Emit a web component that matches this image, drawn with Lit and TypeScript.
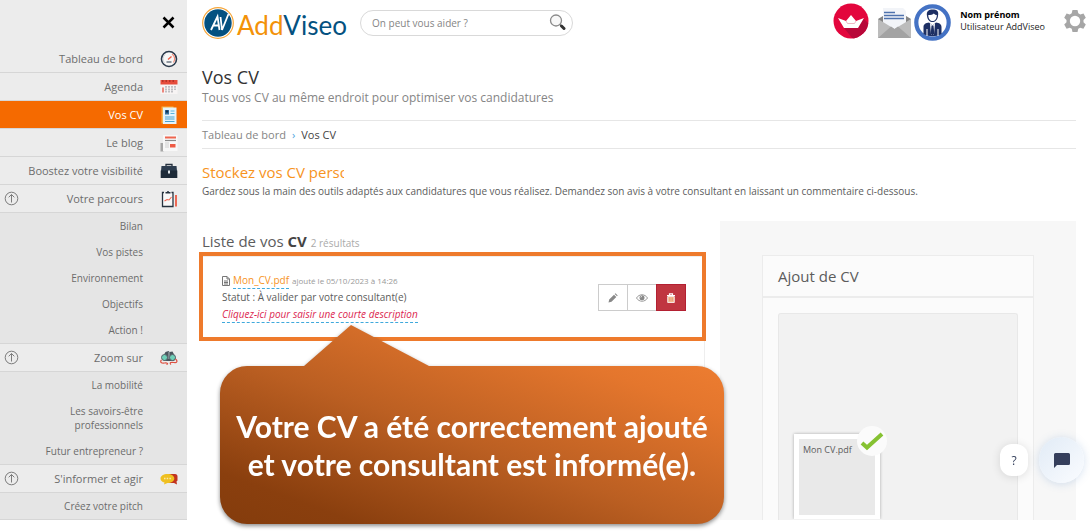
import { LitElement, html, css, svg, nothing, TemplateResult } from "lit";
import { customElement } from "lit/decorators.js";
import { classMap } from "lit/directives/class-map.js";

interface MenuEntry {
  label: string;
  icon: TemplateResult;
  active?: boolean;
  children?: string[];
}

const gauge = svg`
  <circle cx="9" cy="9" r="7.5" fill="#f7f7f7" stroke="#2b3a4c" stroke-width="1.6"/>
  <path d="M4.5 13A6 6 0 0 1 5 4.600" fill="none" stroke="#cfd3d8"/>
  <path d="M12 4a6 6 0 0 1 1.500 8.500" fill="none" stroke="#f28b78" stroke-width="1.200"/>
  <path d="M8 9.500L11.500 6.500" stroke="#ee5b45" stroke-width="1.400"/>
  <path d="M6.500 12h5" stroke="#2b3a4c"/>`;

const agenda = svg`
  <rect x=".5" y="2" width="17" height="14" fill="#f7f4f4"/>
  <rect x=".5" y="2" width="17" height="4.500" fill="#e64c3c"/>
  <path d="M2 3h14" stroke="#a52b20" stroke-width="1.500" stroke-dasharray="1.500 2"/>
  <path d="M3 9.500v5" stroke="#e64c3c" stroke-width="1.300"/>
  <path d="M6 8v6.500M9 8v6.500M12 8v6.500M15 8v4" stroke="#a9a9ae" stroke-width="1.400" stroke-dasharray="1.800 .6"/>`;

const resume = svg`
  <path d="M1.500 .5h12v17h-12z" fill="#f6b44c"/>
  <path d="M3 1.500H16.500v16.500H3z" fill="#e3f3fb"/>
  <rect x="5" y="4" width="4" height="4.500" fill="#2f6f9d"/>
  <circle cx="7" cy="5.500" r="1.200" fill="#15324e"/>
  <path d="M10.500 5h4M10.500 7.500h4" stroke="#5ab4dc"/>
  <path d="M5 11h9.500M5 13h9.500M5 15.500h9.500" stroke="#4ba3cd" stroke-width="1.200"/>`;

const news = svg`
  <path d="M.5 9h3v8.500h-3z" fill="#a7a7a7"/>
  <rect x="3" y="1" width="14.500" height="16" fill="#f8f8f8"/>
  <path d="M5 3.500h11" stroke="#ee6650" stroke-width="2"/>
  <path d="M5 6.500h11" stroke="#8b8b8b" stroke-width="1.200"/>
  <path d="M5 9h4M5 11h4M5 13h4" stroke="#d0d0d0"/>
  <rect x="10" y="10" width="5.500" height="3.500" fill="#ee5b45"/>`;

const briefcase = svg`
  <path d="M6 4V2.500h6V4" fill="none" stroke="#26323f" stroke-width="1.300"/>
  <path d="M1.500 4h15l.5 5H1z" fill="#2d3d4f"/>
  <path d="M.7 8.500h16.600V16H.7z" fill="#1d2a38"/>
  <rect x="8" y="8.500" width="2" height="3" fill="#dfe5ea"/>`;

const clipboard = svg`
  <rect x="2" y="2.500" width="12" height="14.500" fill="#f8f8f8"/>
  <path d="M4 2.500H2.500V16.500H13V2.500h-1.500" fill="none" stroke="#26323f" stroke-width="1.300"/>
  <path d="M5.500 3.500V2h1.500a1 1 0 0 1 2 0h1.500v1.500z" fill="#26323f"/>
  <path d="M4.500 11l2.500-1.500 2 .5 2.500-3" fill="none" stroke="#ee6650" stroke-width="1.100"/>
  <path d="M16 5v11.500" stroke="#ee5b45" stroke-width="1.800"/>`;

const binoculars = svg`
  <path d="M2 9L5.500 3l3-1 1 1 3-.5 3.500 6.500-2 3H4z" fill="#4b555d"/>
  <path d="M8 3h2v7H8z" fill="#7b868d"/>
  <circle cx="4.500" cy="8.500" r="3" fill="#6fd0b8" stroke="#59646c"/>
  <circle cx="12.500" cy="8.500" r="3" fill="#6fd0b8" stroke="#59646c"/>
  <path d="M1.500 11c-2 2 0 3.500 3 3s4 1 2 1.500M15.500 10c2.500 2 1.500 4-1.500 3.500s-5 0-3 2" fill="none" stroke="#de5142" stroke-width="1.200"/>`;

const chats = svg`
  <path d="M9 4h6a2.500 2.500 0 0 1 2.500 2.500v4l-1 1 .5 3-3-1.500H9z" fill="#c23420"/>
  <path d="M7.500 4c4 0 6.800 2 6.800 4.500s-2.800 4.500-6.800 4.500l-3.500 1.500.5-2C2 12 .5 10.500.5 8.500.5 6 3.500 4 7.500 4z" fill="#efc021"/>
  <path d="M4 8.500h1.500M6.700 8.500h1.500M9.400 8.500h1.500" stroke="#fbe9ac" stroke-width="1.300"/>`;

const MENU: MenuEntry[] = [
  { label: "Tableau de bord", icon: gauge },
  { label: "Agenda", icon: agenda },
  { label: "Vos CV", icon: resume, active: true },
  { label: "Le blog", icon: news },
  { label: "Boostez votre visibilité", icon: briefcase },
  {
    label: "Votre parcours",
    icon: clipboard,
    children: ["Bilan", "Vos pistes", "Environnement", "Objectifs", "Action !"],
  },
  {
    label: "Zoom sur",
    icon: binoculars,
    children: ["La mobilité", "Les savoirs-être professionnels", "Futur entrepreneur ?"],
  },
  { label: "S'informer et agir", icon: chats, children: ["Créez votre pitch"] },
];

@customElement("side-menu")
class SideMenu extends LitElement {
  static styles = css`
    :host {
      display: block;
      background: #ececec;
      color: #6c6c6c;
    }
    ul {
      list-style: none;
      margin: 0;
      padding: 0;
    }
    a {
      color: inherit;
      text-decoration: none;
    }
    button {
      padding: 0;
      border: 0;
      background: none;
      cursor: pointer;
    }
    svg {
      display: block;
    }
    .top {
      display: flex;
      justify-content: flex-end;
      align-items: center;
      height: 45px;
      padding-right: 12px;
    }
    .row {
      display: flex;
      align-items: center;
      height: 27px;
      padding: 0 9px 0 4px;
      border-bottom: 1px solid #d6d6d6;
    }
    .link {
      flex: 1;
      display: flex;
      align-items: center;
      justify-content: flex-end;
      gap: 17px;
      font-size: 11px;
      line-height: 27px;
    }
    .active {
      background: #f56a00;
      color: #fff;
      font-weight: 500;
    }
    .sub {
      background: #e5e5e5;
      border-bottom: 1px solid #d6d6d6;
    }
    .sub a {
      display: block;
      padding: 6px 44px 6px 56px;
      text-align: right;
      font-size: 10px;
      line-height: 14px;
    }
    .sub .wide {
      padding-left: 20px;
    }
  `;

  render() {
    return html`
      <div class="top">
        <button aria-label="Fermer le menu">
          <svg width="13" height="13" viewBox="0 0 13 13">
            <path d="M1.500 1.500l10 10M11.500 1.500l-10 10" stroke="#000" stroke-width="2.500" />
          </svg>
        </button>
      </div>
      <nav>
        <ul>
          ${MENU.map(
            (m) => html`<li>
              <div class=${classMap({ row: true, active: !!m.active })}>
                ${m.children
                  ? html`<button aria-label="Replier ${m.label}">
                      <svg width="15" height="15" viewBox="0 0 15 15" fill="none" stroke="#7c7c7c">
                        <circle cx="7.500" cy="7.500" r="6.300" />
                        <path d="M7.500 11.500v-8M4.700 6.300l2.800-2.800 2.800 2.800" />
                      </svg>
                    </button>`
                  : nothing}
                <a class="link" href="#">
                  ${m.label}<svg width="18" height="18" viewBox="0 0 18 18" aria-hidden="true">${m.icon}</svg>
                </a>
              </div>
              ${m.children
                ? html`<ul class="sub">
                    ${m.children.map(
                      (c) => html`<li><a href="#" class=${classMap({ wide: c.length < 25 })}>${c}</a></li>`
                    )}
                  </ul>`
                : nothing}
            </li>`
          )}
        </ul>
      </nav>
    `;
  }
}

@customElement("top-bar")
class TopBar extends LitElement {
  static styles = css`
    :host {
      display: flex;
      align-items: center;
      height: 45px;
      padding: 0 4px 0 15px;
    }
    svg {
      display: block;
    }
    button {
      padding: 0;
      border: 0;
      background: none;
      cursor: pointer;
    }
    .logo-text {
      font-family: Lato, sans-serif;
      font-size: 26px;
    }
    .search {
      display: flex;
      align-items: center;
      flex: 0 1 213px;
      box-sizing: border-box;
      height: 26px;
      margin-left: 15px;
      padding: 0 6px 0 11px;
      border: 1px solid #d9d9d9;
      border-radius: 13px;
    }
    .search input {
      flex: 1;
      min-width: 0;
      padding: 0;
      border: 0;
      outline: 0;
      background: none;
      font: 10px "Open Sans", sans-serif;
    }
    .search input::placeholder {
      color: #858585;
    }
    .tools {
      display: flex;
      align-items: center;
      margin-left: auto;
    }
    .raised {
      padding-bottom: 4px;
    }
    .mail {
      margin: 0 3px 0 9px;
    }
    .user {
      margin: 0 19px 4px 9px;
      color: #222;
      font-size: 9px;
      line-height: 12px;
      white-space: nowrap;
    }
    .name {
      display: block;
      color: #000;
    }
  `;

  render() {
    return html`
      <a href="#" aria-label="AddViseo">
        <svg width="143" height="40" viewBox="0 0 143 40" overflow="visible">
          <circle cx="16" cy="20" r="15.300" fill="#fff" stroke="#f6a63a" stroke-width="1.200" />
          <circle cx="16" cy="20" r="13.700" fill="#045180" />
          <path d="M9 27L15.500 13.500l2 13.500M11.500 22.500h5.500M18.500 14l1.500 13L26.500 11" fill="none" stroke="#fff" stroke-width="1.800" />
          <text class="logo-text" x="35" y="32" fill="#f39208">Add<tspan fill="#045180">Viseo</tspan></text>
        </svg>
      </a>
      <label class="search">
        <input type="search" placeholder="On peut vous aider ?" aria-label="Rechercher" />
        <svg width="17" height="17" viewBox="0 0 17 17">
          <circle cx="7" cy="6.500" r="5.500" fill="#f8f8f8" stroke="#8a8a8a" stroke-width="1.300" />
          <path d="M11 10.500l1 1" stroke="#777" stroke-width="1.500" />
          <path d="M12.500 12l2.500 2.500" stroke="#333" stroke-width="3" stroke-linecap="round" />
        </svg>
      </label>
      <div class="tools">
        <button class="raised" aria-label="Embarquer">
          <svg width="36" height="36" viewBox="0 0 36 36">
            <defs><clipPath id="disc"><circle cx="18" cy="18" r="17.500" /></clipPath></defs>
            <circle cx="18" cy="18" r="17.500" fill="#e3063d" />
            <path clip-path="url(#disc)" d="M31 16L43 28V42H25L11 25z" fill="#b80739" />
            <path d="M5 15l8 3 5-6 5 6 8-3-4.500 7.500L25 25H11l-1.500-2.500z" fill="#fff" />
            <path d="M13 18l1.500 2.500h7L23 18" fill="none" stroke="#e9a5b5" stroke-width=".8" />
          </svg>
        </button>
        <button class="mail" aria-label="Messages">
          <svg width="33" height="32" viewBox="0 0 33 32">
            <path d="M0 12L16.500 2 33 12v19H0z" fill="#858585" />
            <path d="M5 1h20l3 3v19H5z" fill="#f2f4f8" />
            <path d="M6 5.500h11M6 8.500h20M6 11.500h20" stroke="#4f72ad" stroke-width="1.400" />
            <path d="M0 12l16.500 10L33 12v19H0z" fill="#bcbcbc" />
            <path d="M0 31l13-11.500 3.500 2.500 3.500-2.500L33 31z" fill="#a3a3a3" />
          </svg>
        </button>
        <svg width="37" height="37" viewBox="0 0 37 37" aria-hidden="true">
          <circle cx="18.500" cy="18.500" r="16.200" fill="#fff" stroke="#4472c4" stroke-width="4.200" />
          <path d="M13 12c-1-5 2-6.500 5.500-6.500 4.500 0 6.500 1.500 5.500 6.500-.5 4-3 6-5.500 6s-5-2-5.500-6z" fill="#1d2f63" />
          <path d="M14.300 11c2.500 0 4.500-.5 5.500-1.500 1 1 2 1.500 3 1.500 0 4-2 6-4.200 6s-4.300-2-4.300-6z" fill="#fff" />
          <path d="M9.500 30V23c0-3 2.500-4 5.500-4.500l3.500 3 3.500-3c3 .5 5.500 1.500 5.500 4.500v7c-5 3-13 3-18 0z" fill="#1d2f63" />
          <path d="M16 19.500l2.500 2 2.500-2-1 11h-3z" fill="#fff" />
          <path d="M17.500 21.500h2l.8 8-1.800 2-1.800-2z" fill="#1d2f63" />
          <path d="M13 25v7M24 25v7" stroke="#fff" />
        </svg>
        <div class="user"><strong class="name">Nom prénom</strong>Utilisateur AddViseo</div>
        <button class="raised" aria-label="Paramètres">
          <svg width="22" height="24" viewBox="0 0 22 24">
            <path
              d="M8.500 1h5l.8 3.300 2 1.100 3.200-1 2.300 4.300L19.500 11v2.200l2.300 2.200-2.400 4.300-3.200-1-1.900 1.100L13.500 23h-5l-.8-3.200-1.900-1.100-3.200 1L.2 15.400l2.300-2.200V11L.2 8.700l2.400-4.300 3.200 1 1.900-1.100z"
              fill="#a6a6a6"
            />
            <circle cx="11" cy="12" r="5.200" fill="#fff" />
          </svg>
        </button>
      </div>
    `;
  }
}

@customElement("app-root")
class AppRoot extends LitElement {
  static styles = css`
    :host {
      display: grid;
      grid-template-columns: 187px minmax(0, 1fr);
      box-sizing: border-box;
      min-height: 100vh;
      padding-bottom: 11px;
      background: #fff;
      color: #5c5c5c;
      font-family: "Open Sans", sans-serif;
      font-size: 11px;
    }
    h1,
    h2,
    h3,
    p {
      margin: 0;
      font-weight: 400;
    }
    a {
      color: inherit;
      text-decoration: none;
    }
    svg {
      display: block;
    }
    button {
      padding: 0;
      border: 0;
      cursor: pointer;
    }
    .page {
      display: flex;
      flex-direction: column;
    }
    .content {
      flex: 1;
      display: flex;
      flex-direction: column;
      padding: 20px 14px 0 15px;
    }
    .title {
      color: #333;
      font-size: 18px;
      line-height: 24px;
    }
    .subtitle {
      padding-bottom: 13px;
      color: #858585;
      font-size: 12px;
      line-height: 18px;
    }
    .crumbs {
      display: flex;
      gap: 6px;
      border: solid #e6e6e6;
      border-width: 1px 0;
      color: #858585;
      line-height: 27px;
    }
    .sep {
      color: #4ba3dd;
    }
    .here {
      color: #444;
    }
    .promo {
      width: 142px;
      margin-top: 12px;
      overflow: hidden;
      color: #f7941e;
      font-size: 15px;
      line-height: 22px;
      white-space: nowrap;
    }
    .intro {
      font-size: 10px;
      line-height: 16px;
    }
    .columns {
      flex: 1;
      display: grid;
      grid-template-columns: minmax(0, 503px) minmax(0, 356px);
      justify-content: space-between;
      margin-top: 22px;
    }
    .list {
      position: relative;
      display: flex;
      flex-direction: column;
    }
    .list-title {
      padding-top: 9px;
      font-size: 15px;
      line-height: 22px;
    }
    .list-title strong {
      color: #444;
    }
    .count {
      color: #aaa;
      font-size: 10px;
      line-height: 16px;
    }
    .entry {
      display: flex;
      align-items: center;
      justify-content: space-between;
      margin: 0 -1px 0 -3px;
      padding: 16px 16px 14px 19px;
      border: 4px solid #ee7a2c;
      box-shadow: inset 0 1px #eee;
      font-size: 10px;
      line-height: 17px;
    }
    .file {
      display: flex;
      align-items: center;
      gap: 3px;
    }
    .file-name {
      border-bottom: 1px dashed #3fa9dc;
      color: #f7941e;
      line-height: 15px;
    }
    .date {
      color: #999;
      font-size: 8px;
    }
    .describe {
      display: inline-block;
      border-bottom: 1px dashed #3fa9dc;
      color: #dc1f50;
      font-style: italic;
      line-height: 15px;
    }
    .actions {
      display: flex;
    }
    .actions button {
      display: grid;
      place-items: center;
      width: 30px;
      height: 27px;
      margin-left: -1px;
      border: 1px solid #ccc;
      background: #fff;
    }
    .actions .delete {
      border-color: #b32032;
      background: #c03540;
    }
    .rest {
      flex: 1;
      border-right: 1px solid #eee;
    }
    .callout {
      position: absolute;
      left: 18px;
      top: 104px;
      width: 504px;
      filter: drop-shadow(0 2px 2px rgba(0, 0, 0, 0.45));
    }
    .callout-text {
      position: absolute;
      inset: 41px 0 0;
      display: grid;
      place-content: center;
      color: #fff;
      font: 700 30px/38px Lato, sans-serif;
      text-align: center;
      white-space: nowrap;
    }
    .side {
      padding: 34px 42px 0;
      background: #f7f7f7;
    }
    .panel {
      display: flex;
      flex-direction: column;
      box-sizing: border-box;
      height: 100%;
      border: 1px solid #ececec;
      border-bottom: 0;
      background: #fbfbfb;
    }
    .panel-title {
      padding: 0 15px;
      border-bottom: 2px solid #ececec;
      font-size: 15px;
      line-height: 40px;
    }
    .drop {
      flex: 1;
      margin: 15px 15px 0;
      padding: 120px 15px 0;
      border: 1px solid #e8e8e8;
      border-bottom: 0;
      border-radius: 3px 3px 0 0;
      background: #f2f2f2;
    }
    .thumb {
      position: relative;
      width: 76px;
      padding: 5px 5px 4px;
      background: #fff;
      box-shadow: 0 0 3px rgba(0, 0, 0, 0.3);
      clip-path: inset(-8px -40px 0 -4px);
    }
    .preview {
      height: 76px;
      padding-left: 4px;
      background: #e9e9e9;
      font-size: 9px;
      line-height: 22px;
    }
    .check {
      position: absolute;
      top: -8px;
      right: -7px;
    }
    .floating {
      position: fixed;
      right: 6px;
      bottom: 48px;
      display: flex;
      align-items: center;
      gap: 11px;
    }
    .help {
      width: 28px;
      height: 32px;
      border-radius: 12px;
      background: #fff;
      box-shadow: 0 1px 10px rgba(0, 0, 0, 0.12);
      color: #35405c;
      font: 500 12px "Open Sans", sans-serif;
    }
    .chat {
      display: grid;
      place-items: center;
      width: 45px;
      height: 46px;
      border-radius: 23px;
      background: linear-gradient(135deg, #e1ebf6, #fafcff);
      box-shadow: 0 1px 8px rgba(90, 140, 200, 0.25);
    }
  `;

  render() {
    return html`
      <side-menu></side-menu>
      <div class="page">
        <top-bar></top-bar>
        <main class="content">
          <h1 class="title">Vos CV</h1>
          <p class="subtitle">Tous vos CV au même endroit pour optimiser vos candidatures</p>
          <nav class="crumbs" aria-label="Fil d'Ariane">
            <a href="#">Tableau de bord</a><span class="sep">›</span><span class="here">Vos CV</span>
          </nav>
          <h2 class="promo">Stockez vos CV perso</h2>
          <p class="intro">
            Gardez sous la main des outils adaptés aux candidatures que vous réalisez. Demandez son avis à votre
            consultant en laissant un commentaire ci-dessous.
          </p>
          <div class="columns">
            <section class="list">
              <h2 class="list-title">Liste de vos <strong>CV</strong> <span class="count">2 résultats</span></h2>
              <article class="entry">
                <div>
                  <div class="file">
                    <svg width="8" height="10" viewBox="0 0 8 10" fill="none" stroke="#777">
                      <path d="M.5.5h4.500l2.500 2.500v6.500h-7zM5 .5V3h2.500M2 5h4M2 6.500h4M2 8h4" />
                    </svg>
                    <a class="file-name" href="#">Mon_CV.pdf</a>
                    <span class="date">ajouté le 05/10/2023 à 14:26</span>
                  </div>
                  <div>Statut : À valider par votre consultant(e)</div>
                  <a class="describe" href="#">Cliquez-ici pour saisir une courte description</a>
                </div>
                <div class="actions">
                  <button aria-label="Modifier">
                    <svg width="10" height="10" viewBox="0 0 10 10">
                      <path d="M.5 9.500l.7-3L6 1.700l2.300 2.300-4.800 4.800zM6.700 1l.8-.7 2.200 2.200-.7.800z" fill="#888" />
                    </svg>
                  </button>
                  <button aria-label="Voir">
                    <svg width="12" height="8" viewBox="0 0 12 8">
                      <path d="M.5 4C3-.3 9-.3 11.500 4 9 8.300 3 8.300.5 4z" fill="#fff" stroke="#999" />
                      <circle cx="6" cy="3.700" r="2.500" fill="#888" />
                      <path d="M4.800 3.500A1.300 1.300 0 0 1 6 2.300" fill="none" stroke="#fff" stroke-width=".7" />
                    </svg>
                  </button>
                  <button class="delete" aria-label="Supprimer">
                    <svg width="10" height="10" viewBox="0 0 10 10">
                      <path d="M1 2.500h8M3.500 2.200V.8h3v1.400" fill="none" stroke="#fff" stroke-width="1.200" />
                      <path d="M1.700 3.500h6.600V9.500H1.700z" fill="#f3bd92" stroke="#fff" stroke-width=".8" />
                      <path d="M3.800 4.500v3.500M6.200 4.500v3.500" stroke="#e08a6c" stroke-width=".7" />
                    </svg>
                  </button>
                </div>
              </article>
              <div class="rest"></div>
              <div class="callout" role="status">
                <svg width="504" height="199" viewBox="0 0 504 199">
                  <defs>
                    <linearGradient id="rust" gradientUnits="userSpaceOnUse" x1="0" y1="199" x2="111" y2="-104">
                      <stop offset="0" stop-color="#843c0c" />
                      <stop offset=".15" stop-color="#8a3f0e" />
                      <stop offset=".5" stop-color="#bb5f22" />
                      <stop offset=".85" stop-color="#e4762d" />
                      <stop offset="1" stop-color="#ed7d31" />
                    </linearGradient>
                  </defs>
                  <path
                    d="M27 41H84L131 0l78 41H477a27 27 0 0 1 27 27V172a27 27 0 0 1-27 27H27a27 27 0 0 1-27-27V68a27 27 0 0 1 27-27z"
                    fill="url(#rust)"
                  />
                </svg>
                <p class="callout-text">Votre CV a été correctement ajouté<br />et votre consultant est informé(e).</p>
              </div>
            </section>
            <aside class="side">
              <section class="panel">
                <h3 class="panel-title">Ajout de CV</h3>
                <div class="drop">
                  <div class="thumb">
                    <div class="preview">Mon CV.pdf</div>
                    <svg class="check" width="30" height="30" viewBox="0 0 30 30" aria-label="Ajouté">
                      <circle cx="15" cy="15" r="15" fill="#fbfbfb" />
                      <path d="M5 17l5 4.500L25 8" fill="none" stroke="#86c232" stroke-width="4" />
                    </svg>
                  </div>
                </div>
              </section>
            </aside>
          </div>
        </main>
      </div>
      <div class="floating">
        <button class="help" aria-label="Aide">?</button>
        <button class="chat" aria-label="Discuter">
          <svg width="16" height="15" viewBox="0 0 16 15">
            <path d="M1.500 0h13A1.500 1.500 0 0 1 16 1.500v9a1.500 1.500 0 0 1-1.500 1.500H3L0 15V1.500A1.500 1.500 0 0 1 1.500 0z" fill="#353f5c" />
          </svg>
        </button>
      </div>
    `;
  }
}
